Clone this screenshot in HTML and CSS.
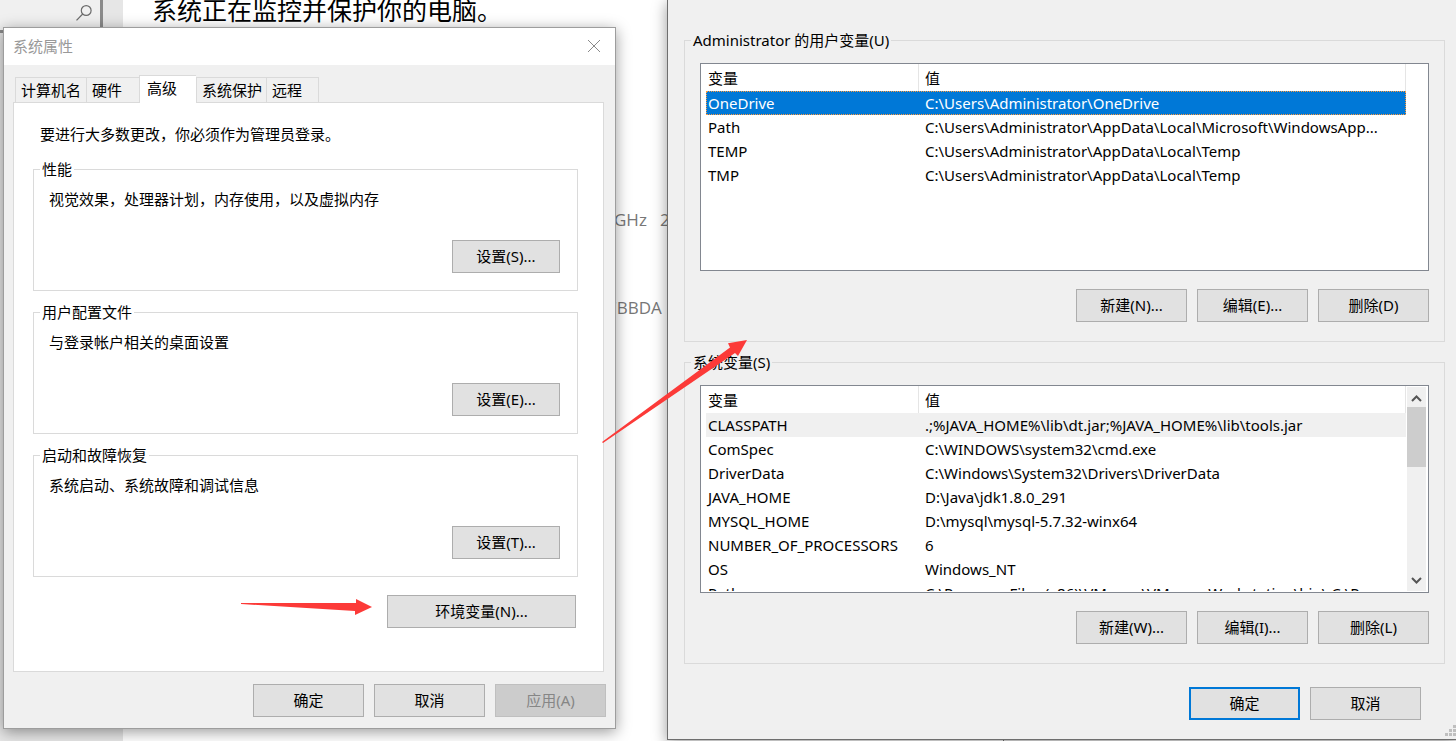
FILE: index.html
```html
<!DOCTYPE html>
<html lang="zh-CN">
<head>
<meta charset="utf-8">
<title>系统属性</title>
<link rel="stylesheet" href="styles.css">
</head>
<body>
<div class="backdrop">
  <div class="sidebar">
    <div class="search">
      <svg width="18" height="18" viewBox="0 0 18 18" fill="none" stroke="#6b6b6b" stroke-width="1.2"><circle cx="11.2" cy="6.5" r="4.9"/><path d="M7.7 10 1.5 16.3"/></svg>
    </div>
  </div>
  <p class="headline">系统正在监控并保护你的电脑。</p>
  <p class="spec spec-cpu">GHz&nbsp;&nbsp; 2</p>
  <p class="spec spec-id">7BBDA</p>
  <div class="underlay"></div>
</div>

<main class="desktop">
  <section class="window props" aria-label="系统属性">
    <header class="titlebar">
      <h1>系统属性</h1>
      <button class="close" aria-label="关闭"><svg width="14" height="14" viewBox="0 0 14 14" fill="none" stroke="#8a8a8a" stroke-width="1"><path d="M1 1 13 13M13 1 1 13"/></svg></button>
    </header>
    <div class="props-body">
      <div class="tabs" role="tablist">
        <button class="tab" role="tab">计算机名</button>
        <button class="tab" role="tab">硬件</button>
        <button class="tab active" role="tab" aria-selected="true">高级</button>
        <button class="tab" role="tab">系统保护</button>
        <button class="tab" role="tab">远程</button>
      </div>
      <div class="panel" role="tabpanel">
        <p class="note">要进行大多数更改，你必须作为管理员登录。</p>
        <div class="groups">
          <fieldset class="group">
            <legend>性能</legend>
            <p>视觉效果，处理器计划，内存使用，以及虚拟内存</p>
            <button class="btn">设置(S)...</button>
          </fieldset>
          <fieldset class="group">
            <legend>用户配置文件</legend>
            <p>与登录帐户相关的桌面设置</p>
            <button class="btn">设置(E)...</button>
          </fieldset>
          <fieldset class="group">
            <legend>启动和故障恢复</legend>
            <p>系统启动、系统故障和调试信息</p>
            <button class="btn">设置(T)...</button>
          </fieldset>
        </div>
        <button class="btn env-btn">环境变量(N)...</button>
      </div>
    </div>
    <footer class="actions">
      <button class="btn">确定</button>
      <button class="btn">取消</button>
      <button class="btn" disabled>应用(A)</button>
    </footer>
  </section>

  <section class="window vars" aria-label="环境变量">
    <fieldset class="group">
      <legend>Administrator 的用户变量(U)</legend>
      <div class="list">
        <div class="rows">
          <table>
            <thead><tr><th>变量</th><th>值</th></tr></thead>
            <tbody>
              <tr class="selected"><td>OneDrive</td><td>C:\Users\Administrator\OneDrive</td></tr>
              <tr><td>Path</td><td>C:\Users\Administrator\AppData\Local\Microsoft\WindowsApp...</td></tr>
              <tr><td>TEMP</td><td>C:\Users\Administrator\AppData\Local\Temp</td></tr>
              <tr><td>TMP</td><td>C:\Users\Administrator\AppData\Local\Temp</td></tr>
            </tbody>
          </table>
        </div>
        <div class="gutter"></div>
      </div>
      <div class="row-actions">
        <button class="btn">新建(N)...</button>
        <button class="btn">编辑(E)...</button>
        <button class="btn">删除(D)</button>
      </div>
    </fieldset>
    <fieldset class="group">
      <legend>系统变量(S)</legend>
      <div class="list">
        <div class="rows">
          <table>
            <thead><tr><th>变量</th><th>值</th></tr></thead>
            <tbody>
              <tr class="current"><td>CLASSPATH</td><td>.;%JAVA_HOME%\lib\dt.jar;%JAVA_HOME%\lib\tools.jar</td></tr>
              <tr><td>ComSpec</td><td>C:\WINDOWS\system32\cmd.exe</td></tr>
              <tr><td>DriverData</td><td>C:\Windows\System32\Drivers\DriverData</td></tr>
              <tr><td>JAVA_HOME</td><td>D:\Java\jdk1.8.0_291</td></tr>
              <tr><td>MYSQL_HOME</td><td>D:\mysql\mysql-5.7.32-winx64</td></tr>
              <tr><td>NUMBER_OF_PROCESSORS</td><td>6</td></tr>
              <tr><td>OS</td><td>Windows_NT</td></tr>
              <tr><td>Path</td><td>C:\Program Files (x86)\VMware\VMware Workstation\bin\;C:\P...</td></tr>
            </tbody>
          </table>
        </div>
        <div class="gutter scrollbar">
          <svg width="19" height="20" viewBox="0 0 19 20" fill="none" stroke="#555" stroke-width="2"><path d="M5 14 9.500 9.500 14 14"/></svg>
          <div class="thumb"></div>
          <svg width="19" height="20" viewBox="0 0 19 20" fill="none" stroke="#555" stroke-width="2"><path d="M5 7 9.500 11.500 14 7"/></svg>
        </div>
      </div>
      <div class="row-actions">
        <button class="btn">新建(W)...</button>
        <button class="btn">编辑(I)...</button>
        <button class="btn">删除(L)</button>
      </div>
    </fieldset>
    <footer class="actions">
      <button class="btn default">确定</button>
      <button class="btn">取消</button>
    </footer>
    <svg class="grip" width="11" height="11" viewBox="0 0 11 11" fill="#bfbfbf"><path d="M8 0h3v3H8zM4 4h3v3H4zM8 4h3v3H8zM0 8h3v3H0zM4 8h3v3H4zM8 8h3v3H8z"/></svg>
  </section>
</main>

<svg class="arrow arrow-short" width="132" height="18" viewBox="0 0 132 18" fill="#fc3a38"><path d="M0 4 115 4V0L131 8 114 16V12L0 5Z"/></svg>
<svg class="arrow arrow-long" width="146" height="104" viewBox="0 0 146 104" fill="#fc3a38"><path d="M0 102 128 7.500 126 3.300 145 0 136 16 133 13 1 103Z"/></svg>
</body>
</html>
```

FILE: styles.css
```css
* { box-sizing: border-box; }

body {
  margin: 0;
  min-height: 100vh;
  overflow: hidden;
  position: relative;
  background: #fff;
  color: #000;
  font: 15px/20px "Noto Sans", "Noto Sans CJK SC", sans-serif;
}

p, h1 { margin: 0; }

button {
  font: inherit;
  color: inherit;
  border-radius: 0;
}

/* Settings page behind the dialogs */
.backdrop {
  position: absolute;
  inset: 0;
  overflow: hidden;
}

.sidebar {
  width: 123px;
  height: 100%;
  background: #e6e6e6;
}

.search {
  display: flex;
  justify-content: flex-end;
  width: 103px;
  height: 33px;
  padding: 4px 7px;
  background: #f0f0f0;
  border: solid #8a8a8a;
  border-width: 0 3px 3px 0;
}

.headline {
  position: absolute;
  left: 152px;
  top: -7px;
  font-size: 25px;
  line-height: 34px;
}

.spec {
  position: absolute;
  font: 17px/24px "Open Sans", sans-serif;
  color: #777;
}

.spec-cpu { left: 614px; top: 208px; }
.spec-id { left: 607px; top: 296px; }

.underlay {
  position: absolute;
  left: 1003px;
  right: 0;
  bottom: 0;
  height: 40px;
  background: #f0f0f0;
  border-left: 1px solid #777;
}

/* Dialog windows */
.desktop {
  position: relative;
  display: grid;
  grid-template-columns: 613fr 789fr;
  gap: 51px;
  align-items: start;
  padding-left: 3px;
}

.window {
  background: #f0f0f0;
  border: 1px solid #9d9d9d;
  box-shadow: 0 3px 14px rgba(0, 0, 0, 0.4);
}

.props { margin-top: 27px; }

.titlebar {
  display: flex;
  align-items: center;
  justify-content: space-between;
  height: 37px;
  padding: 0 14px 2px 9px;
  background: #fff;
}

.titlebar h1 {
  font-size: 15px;
  font-weight: 400;
  color: #999;
}

.close {
  display: flex;
  padding: 0;
  border: 0;
  background: none;
}

.props-body { padding: 11px 11px 0 9px; }

.tabs {
  display: flex;
  align-items: flex-end;
  height: 26px;
  padding-left: 2px;
}

.tab {
  min-width: 53px;
  height: 25px;
  padding: 0 4px 0 5px;
  text-align: left;
  background: #f0f0f0;
  border: 1px solid #dadada;
  border-width: 1px 0 0 1px;
}

.tab:first-child { padding-right: 5px; }
.tab:last-child { border-right-width: 1px; }

.tab.active {
  min-width: 57px;
  height: 28px;
  margin-bottom: -1px;
  padding: 0 7px 3px;
  background: #fff;
  z-index: 1;
}

.panel {
  display: flex;
  flex-direction: column;
  padding: 21px 25px 43px 19px;
  background: #fff;
  border: 1px solid #dadada;
}

.note { padding: 0 0 15px 7px; }

.groups {
  display: grid;
  gap: 11px;
}

.group {
  min-width: 0;
  margin: 0;
  border: 1px solid #dadada;
}

.group legend {
  margin-left: 6px;
  padding: 0 2px;
}

.props .group {
  display: flex;
  flex-direction: column;
  gap: 31px;
  padding: 10px 17px 17px 0;
}

.props .group p { padding-left: 15px; }

.btn {
  min-width: 111px;
  height: 33px;
  padding: 0 8px 2px;
  background: #e1e1e1;
  border: 1px solid #adadad;
}

.btn.default { border: 2px solid #0078d7; }

.btn:disabled {
  color: #868686;
  background: #ccc;
  border-color: #bfbfbf;
}

.props .group .btn {
  min-width: 108px;
  align-self: flex-end;
}

.panel .env-btn {
  min-width: 189px;
  align-self: flex-end;
  margin: 18px 2px 0 0;
}

.actions,
.row-actions {
  display: flex;
  justify-content: flex-end;
  gap: 10px;
}

.props .actions { padding: 12px 9px 11px; }

/* Environment variables */
.vars {
  position: relative;
  padding: 30px 11px 19px 16px;
  border-color: #6e6e6e;
  border-width: 0 0 1px 1px;
}

.vars .group { padding: 13px 15px 19px; }
.vars .group + .group { margin-top: 10px; }
.vars .group legend { margin-left: -9px; }
.vars .actions { padding: 23px 24px 0; }

.row-actions {
  padding-top: 18px;
}

.list {
  display: flex;
  gap: 1px;
  height: 208px;
  padding: 0 2px 1px 5px;
  background: #fff;
  border: 1px solid #828790;
}

.rows {
  flex: 1;
  min-width: 0;
  overflow: hidden;
}

.gutter {
  width: 19px;
  margin-top: 1px;
}

.scrollbar {
  display: flex;
  flex-direction: column;
  background: #f0f0f0;
}

.thumb {
  height: 60px;
  margin-bottom: auto;
  background: #cdcdcd;
}

.scrollbar svg { flex: none; }

table {
  width: 100%;
  table-layout: fixed;
  border-collapse: separate;
  border-spacing: 0;
}

th, td {
  overflow: hidden;
  text-align: left;
  text-overflow: ellipsis;
  white-space: nowrap;
}

th {
  height: 27px;
  padding: 0 6px;
  font-weight: 400;
  border-right: 1px solid #e5e5e5;
}

td {
  height: 24px;
  padding: 0 6px;
}

th:first-child,
td:first-child {
  width: 213px;
  padding-left: 2px;
  padding-right: 2px;
}

.selected {
  color: #fff;
  background: #0078d7;
  outline: 1px dotted #ff9a3c;
  outline-offset: -1px;
}

.current { background: #f0f0f0; }

.grip {
  position: absolute;
  right: 0;
  bottom: 3px;
}

/* Annotation arrows */
.arrow {
  position: absolute;
  pointer-events: none;
}

.arrow-short { left: 241px; top: 599px; }
.arrow-long { left: 602px; top: 340px; }
```
